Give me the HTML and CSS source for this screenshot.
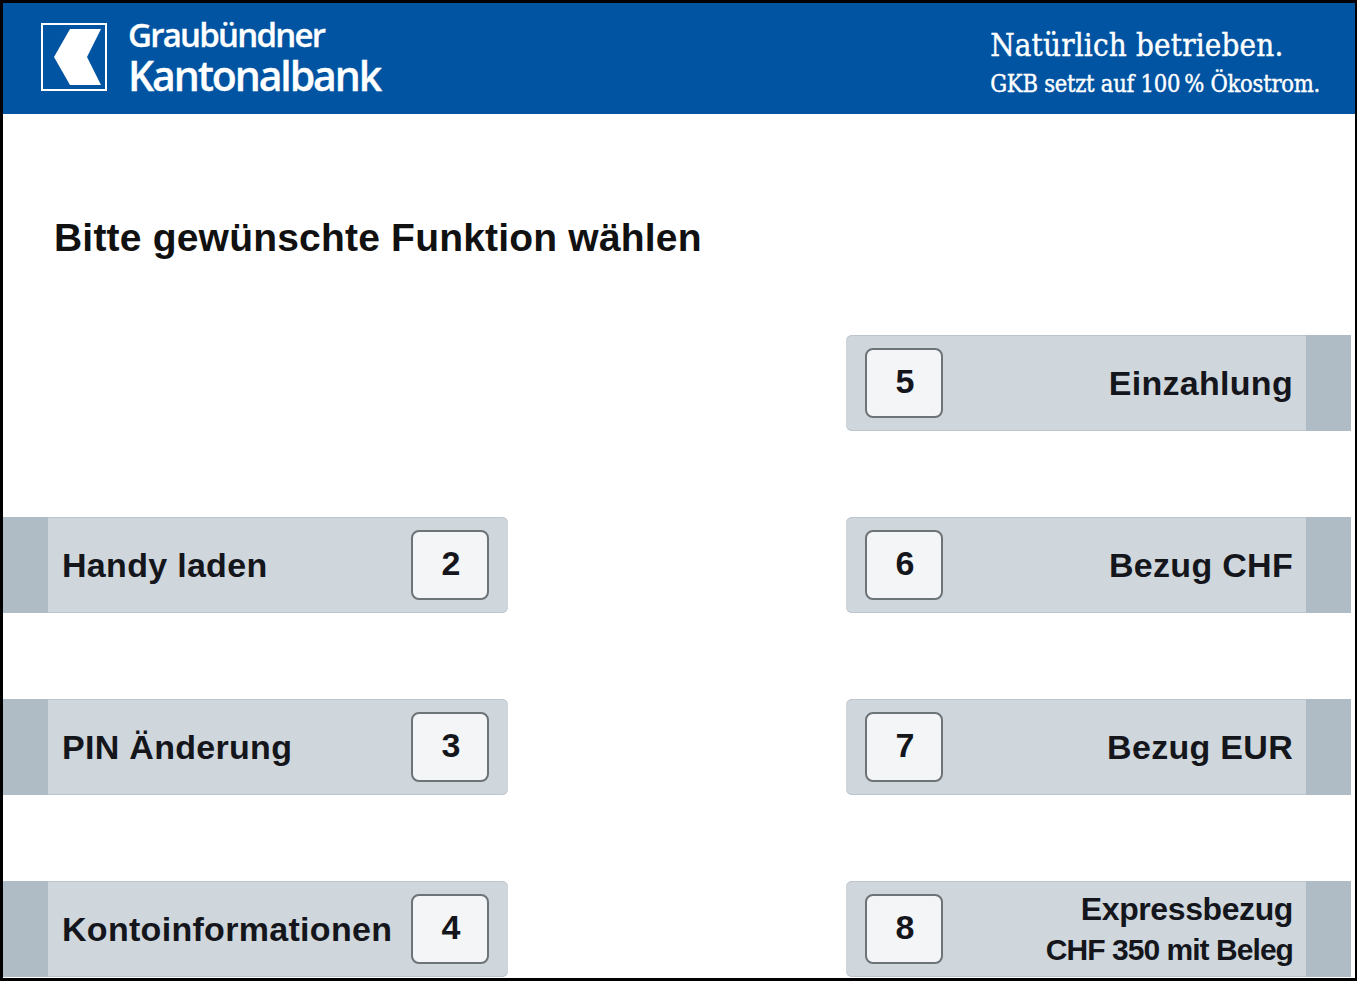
FILE: index.html
```html
<!DOCTYPE html>
<html lang="de">
<head>
<meta charset="utf-8">
<title>Bitte gewünschte Funktion wählen</title>
<link rel="stylesheet" href="styles.css">
</head>
<body>
<div class="frame">
  <header class="banner">
    <div class="brand">
      <svg class="logo" viewBox="0 0 66 68" width="66" height="68" aria-hidden="true">
        <rect x="1" y="1" width="64" height="66" fill="none" stroke="#fff" stroke-width="2"/>
        <path d="M29 6H60L46 34L60 62H29L13 34Z" fill="#fff"/>
      </svg>
      <div class="brand-name">
        <div class="brand-top">Graubündner</div>
        <div class="brand-bottom">Kantonalbank</div>
      </div>
    </div>
    <div class="claim">
      <div class="claim-top">Natürlich betrieben.</div>
      <div class="claim-bottom">GKB setzt auf 100&#8201;% Ökostrom.</div>
    </div>
  </header>
  <main class="content">
    <h1 class="title">Bitte gewünschte Funktion wählen</h1>
    <div class="menu">
      <div class="spacer"></div>
      <div class="btn right"><span class="key">5</span><span class="label">Einzahlung</span><span class="edge"></span></div>
      <div class="btn left"><span class="edge"></span><span class="label">Handy laden</span><span class="key">2</span></div>
      <div class="btn right"><span class="key">6</span><span class="label">Bezug CHF</span><span class="edge"></span></div>
      <div class="btn left"><span class="edge"></span><span class="label">PIN Änderung</span><span class="key">3</span></div>
      <div class="btn right"><span class="key">7</span><span class="label">Bezug EUR</span><span class="edge"></span></div>
      <div class="btn left"><span class="edge"></span><span class="label">Kontoinformationen</span><span class="key">4</span></div>
      <div class="btn right"><span class="key">8</span><span class="label two"><span>Expressbezug</span><small>CHF 350 mit Beleg</small></span><span class="edge"></span></div>
    </div>
  </main>
</div>
</body>
</html>
```
FILE: styles.css
```css
* { box-sizing: border-box; }
html, body { margin: 0; height: 100%; background: #000; }
body { width: 1357px; height: 981px; overflow: hidden; }
.frame {
  width: 1357px;
  height: 981px;
  border-style: solid;
  border-color: #000;
  border-width: 3px 2px 3px 3px;
  background: #fff;
  display: flex;
  flex-direction: column;
}
.banner {
  height: 111px;
  background: #0054a2;
  color: #fff;
  display: flex;
  justify-content: space-between;
  padding: 0 35px 0 38px;
}
.brand { display: flex; align-items: flex-start; padding-top: 20px; gap: 21px; }
.logo { display: block; flex: none; }
.brand-name {
  font-family: "Open Sans", sans-serif;
  font-weight: 600;
  margin-top: -8px;
  -webkit-text-stroke: 0.3px #fff;
}
.brand-top { font-size: 33px; line-height: 39px; letter-spacing: -1.75px; }
.brand-bottom { font-size: 41px; line-height: 42px; letter-spacing: -2.1px; }
.claim {
  font-family: "DejaVu Serif Condensed", "DejaVu Serif", serif;
  padding-top: 24px;
  -webkit-text-stroke: 0.4px #fff;
}
.claim-top { font-size: 31px; line-height: 36px; letter-spacing: 0.2px; }
.claim-bottom { font-size: 23.5px; line-height: 42px; letter-spacing: -0.25px; }
.content { flex: 1; min-height: 0; }
.title {
  margin: 0;
  padding: 101px 0 0 51px;
  height: 221px;
  font: bold 39px/46px "Liberation Sans", Arial, sans-serif;
  letter-spacing: 0.2px;
  color: #111;
}
.menu {
  display: grid;
  grid-template-columns: 505px 505px;
  grid-template-rows: repeat(4, 96px);
  column-gap: 338px;
  row-gap: 86px;
}
.btn {
  display: flex;
  align-items: center;
  background: #cfd6dc;
  font: bold 34px/40px "Liberation Sans", Arial, sans-serif;
  letter-spacing: 0.3px;
  color: #14161c;
  box-shadow: inset 0 1px 0 #bcc5cc, inset 0 -1px 0 #bcc5cc;
  overflow: hidden;
}
.btn.left { border-radius: 0 6px 6px 0; }
.btn.right { border-radius: 6px 0 0 6px; }
.edge { width: 45px; align-self: stretch; background: #b0bcc5; flex: none; }
.key {
  width: 78px;
  height: 70px;
  flex: none;
  display: flex;
  align-items: center;
  justify-content: center;
  background: #f4f5f7;
  border: 2px solid #6d7478;
  border-radius: 8px;
  font-size: 34px;
  padding: 0 0 4px 2px;
}
.left .key { margin-right: 19px; }
.right .key { margin-left: 19px; }
.label { flex: 1; white-space: nowrap; }
.left .label { padding-left: 14px; }
.right .label { text-align: right; padding-right: 13px; }
.two { display: flex; flex-direction: column; line-height: 42px; font-size: 32px; letter-spacing: -0.4px; }
.two small { font-size: 30px; line-height: 40px; letter-spacing: -0.95px; }
```
